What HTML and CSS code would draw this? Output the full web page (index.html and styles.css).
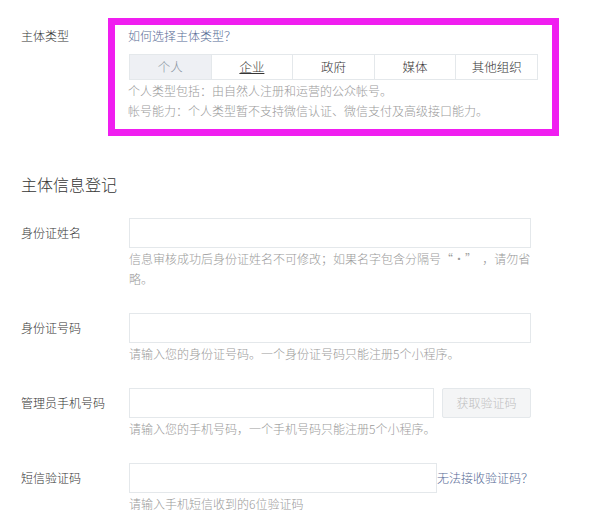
FILE: index.html
```html
<!DOCTYPE html>
<html lang="zh-CN">
<head>
<meta charset="utf-8">
<title>主体信息登记</title>
<link rel="stylesheet" href="styles.css">
</head>
<body>
<div class="page">
  <div class="row row-type">
    <div class="label label-type">主体类型</div>
    <div class="type-box">
      <a class="link" href="#">如何选择主体类型？</a>
      <div class="tabs">
        <div class="tab tab-active">个人</div>
        <div class="tab tab-hover">企业</div>
        <div class="tab">政府</div>
        <div class="tab">媒体</div>
        <div class="tab">其他组织</div>
      </div>
      <p class="desc">个人类型包括：由自然人注册和运营的公众帐号。<br>帐号能力：个人类型暂不支持微信认证、微信支付及高级接口能力。</p>
    </div>
  </div>

  <h2 class="heading">主体信息登记</h2>

  <div class="row field">
    <div class="label">身份证姓名</div>
    <div class="content">
      <div class="input input-full"></div>
      <p class="hint">信息审核成功后身份证姓名不可修改；如果名字包含分隔号“·”&nbsp;&nbsp;，请勿省略。</p>
    </div>
  </div>

  <div class="row field">
    <div class="label">身份证号码</div>
    <div class="content">
      <div class="input input-full"></div>
      <p class="hint">请输入您的身份证号码。一个身份证号码只能注册5个小程序。</p>
    </div>
  </div>

  <div class="row field">
    <div class="label">管理员手机号码</div>
    <div class="content">
      <div class="line">
        <div class="input input-phone"></div>
        <div class="btn">获取验证码</div>
      </div>
      <p class="hint">请输入您的手机号码，一个手机号码只能注册5个小程序。</p>
    </div>
  </div>

  <div class="row field">
    <div class="label">短信验证码</div>
    <div class="content">
      <div class="line">
        <div class="input input-code"></div>
        <a class="link link-inline" href="#">无法接收验证码？</a>
      </div>
      <p class="hint">请输入手机短信收到的6位验证码</p>
    </div>
  </div>
</div>
</body>
</html>
```

FILE: styles.css
```css
* { box-sizing: border-box; }
html, body { margin: 0; padding: 0; background: #fff; }
body {
  font-family: "Noto Sans CJK SC", "Noto Sans", sans-serif;
  font-size: 12px;
  line-height: 20px;
  color: #353535;
  font-weight: 300;
}
.page { padding: 18px 0 0 21px; width: 599px; }
.row { display: flex; align-items: flex-start; }
.label { width: 108px; flex: none; }
.label-type { margin-top: 8px; width: 87px; }
.type-box {
  border: 7px solid #f01ef0;
  width: 451px;
  padding: 1px 14px 8px 13px;
}
.link { color: #576b95; text-decoration: none; }
.link-inline { flex: none; white-space: nowrap; }
.tabs {
  display: flex;
  margin-top: 8px;
  margin-left: 1px;
  border: 1px solid #e4e8eb;
  height: 26px;
}
.tab {
  flex: 1;
  text-align: center;
  line-height: 24px;
  font-size: 12.5px;
  color: #353535;
  border-left: 1px solid #e4e8eb;
  background: #fff;
}
.tab:first-child { border-left: none; }
.tab-active { background: #eef0f4; color: #8a96a3; }
.tab-hover { text-decoration: underline; }
.desc { margin: 1px 0 0; color: #9a9a9a; }
.heading {
  margin: 36px 0 0;
  font-size: 16px;
  font-weight: 300;
  line-height: 24px;
  color: #353535;
}
.field { margin-top: 22px; }
.field .label { line-height: 30px; }
.field + .field { margin-top: 24px; }
.content { width: 402px; }
.input {
  height: 30px;
  border: 1px solid #e4e8eb;
  background: #fff;
  flex: none;
}
.line { display: flex; align-items: center; }
.input-phone { width: 305px; }
.btn {
  flex: none;
  margin-left: 8px;
  width: 89px;
  height: 30px;
  line-height: 28px;
  text-align: center;
  border: 1px solid #e4e8eb;
  background: #f4f5f6;
  color: #bfbfbf;
  border-radius: 2px;
}
.input-code { width: 308px; }
.hint { margin: 1px 0 0; color: #9a9a9a; }
```
